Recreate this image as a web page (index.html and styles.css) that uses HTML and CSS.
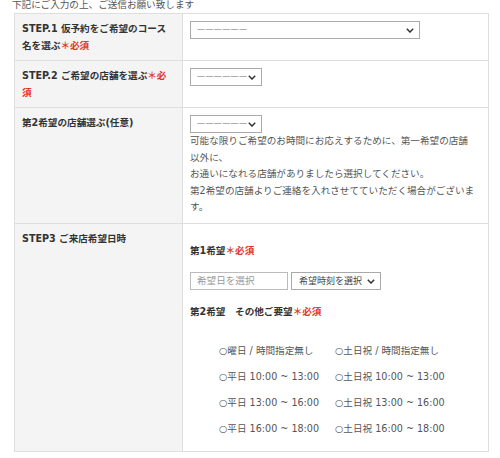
FILE: index.html
```html
<!DOCTYPE html>
<html lang="ja">
<head>
<meta charset="utf-8">
<title>予約フォーム</title>
<link rel="stylesheet" href="styles.css">
</head>
<body>
<p class="intro">下記にご入力の上、ご送信お願い致します</p>
<table class="form">
  <colgroup><col class="c-label"><col class="c-field"></colgroup>
  <tr class="r1">
    <th>STEP.1 仮予約をご希望のコース名を選ぶ<span class="req">＊必須</span></th>
    <td>
      <div class="select w-lg"><span class="dash">——————</span><svg class="chev" width="8" height="5" viewBox="0 0 8 5"><path d="M0.8 0.8 L4 4 L7.2 0.8" fill="none" stroke="#333" stroke-width="1.5"/></svg></div>
    </td>
  </tr>
  <tr class="r2">
    <th>STEP.2 ご希望の店舗を選ぶ<span class="req">＊必須</span></th>
    <td>
      <div class="select w-sm"><span class="dash">——————</span><svg class="chev" width="8" height="5" viewBox="0 0 8 5"><path d="M0.8 0.8 L4 4 L7.2 0.8" fill="none" stroke="#333" stroke-width="1.5"/></svg></div>
    </td>
  </tr>
  <tr class="r3">
    <th>第2希望の店舗選ぶ(任意)</th>
    <td>
      <div class="select w-sm"><span class="dash">——————</span><svg class="chev" width="8" height="5" viewBox="0 0 8 5"><path d="M0.8 0.8 L4 4 L7.2 0.8" fill="none" stroke="#333" stroke-width="1.5"/></svg></div>
      <p class="note">可能な限りご希望のお時間にお応えするために、第一希望の店舗以外に、<br>お通いになれる店舗がありましたら選択してください。<br>第2希望の店舗よりご連絡を入れさせてていただく場合がございます。</p>
    </td>
  </tr>
  <tr class="r4">
    <th>STEP3 ご来店希望日時</th>
    <td>
      <div class="sub">第1希望<span class="req">＊必須</span></div>
      <div class="dt">
        <div class="date">希望日を選択</div>
        <div class="select time"><span class="tlabel">希望時刻を選択</span><svg class="chev" width="8" height="5" viewBox="0 0 8 5"><path d="M0.8 0.8 L4 4 L7.2 0.8" fill="none" stroke="#333" stroke-width="1.5"/></svg></div>
      </div>
      <div class="sub sub2">第2希望　その他ご要望<span class="req">＊必須</span></div>
      <ul class="radios">
        <li>○曜日 / 時間指定無し</li>
        <li>○土日祝 / 時間指定無し</li>
        <li>○平日 10:00 ~ 13:00</li>
        <li>○土日祝 10:00 ~ 13:00</li>
        <li>○平日 13:00 ~ 16:00</li>
        <li>○土日祝 13:00 ~ 16:00</li>
        <li>○平日 16:00 ~ 18:00</li>
        <li>○土日祝 16:00 ~ 18:00</li>
      </ul>
    </td>
  </tr>
</table>
</body>
</html>
```
FILE: styles.css
```css
* { box-sizing: border-box; }

body {
  margin: 0;
  font-family: "DejaVu Sans", "Noto Sans CJK JP", sans-serif;
  font-size: 9.6px;
  color: #555;
  background: #fff;
}

.intro {
  margin: 0 0 3px 0;
  padding-left: 12px;
  height: 10px;
  line-height: 10px;
  color: #555;
}

.form {
  margin-left: 14px;
  width: 474px;
  border-collapse: collapse;
  table-layout: fixed;
}

.c-label { width: 168px; }
.c-field { width: 306px; }

.form th,
.form td {
  border: 1px solid #dedede;
  vertical-align: top;
}

.form th {
  background: #f4f4f4;
  text-align: left;
  font-weight: bold;
  color: #333;
  padding: 6px 9px 6px 7px;
  line-height: 17px;
}

.form td {
  padding: 7px 12px 7px 7px;
  line-height: 16.5px;
  color: #555;
}

.req {
  color: #e0392b;
  font-weight: bold;
}

.select {
  display: flex;
  align-items: center;
  justify-content: space-between;
  height: 18px;
  border: 1px solid #aaa;
  background: #fff;
  padding: 0 5px 0 6px;
  color: #666;
  white-space: nowrap;
  overflow: hidden;
}

.w-lg { width: 230px; }
.w-sm { width: 72px; }

.dash {
  font-size: 8px;
  letter-spacing: 0.4px;
  color: #888;
}

.chev { flex: none; }

.note {
  margin: 0;
}

.sub {
  margin-top: 12px;
  font-weight: bold;
  color: #333;
}

.sub2 { margin-top: 14px; }

.dt {
  display: flex;
  gap: 3px;
  margin-top: 13px;
}

.date {
  width: 98px;
  height: 18px;
  border: 1px solid #bbb;
  padding-left: 6px;
  line-height: 16px;
  color: #999;
  white-space: nowrap;
}

.time {
  width: 90px;
  padding: 0 5px 0 7px;
  color: #444;
}

.tlabel {
  font-size: 9px;
  line-height: 16px;
}

.radios {
  list-style: none;
  margin: 17.5px 0 2px 29px;
  padding: 0;
  display: grid;
  grid-template-columns: 116px auto;
  grid-auto-rows: 26px;
  line-height: 26px;
  color: #555;
}
```
